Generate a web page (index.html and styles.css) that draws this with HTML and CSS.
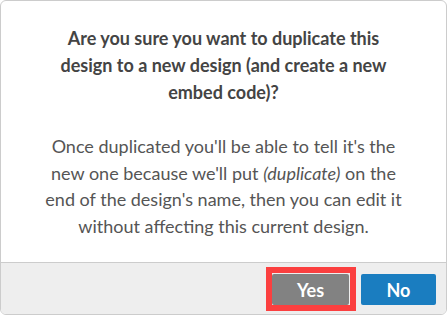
FILE: index.html
```html
<!DOCTYPE html>
<html>
<head>
<meta charset="utf-8">
<link rel="stylesheet" href="styles.css">
</head>
<body>
<div class="dialog">
  <div class="dialog-body">
    <h2 class="title">Are you sure you want to duplicate this design to a new design (and create a new embed code)?</h2>
    <p class="message">Once duplicated you'll be able to tell it's the new one because we'll put <em>(duplicate)</em> on the end of the design's name, then you can edit it without affecting this current design.</p>
  </div>
  <div class="dialog-footer">
    <button class="btn btn-yes">Yes</button>
    <button class="btn btn-no">No</button>
  </div>
</div>
</body>
</html>
```

FILE: styles.css
```css
html, body {
  margin: 0;
  padding: 0;
  background: #ffffff;
}
body {
  font-family: Lato, "Open Sans", sans-serif;
}
.dialog {
  width: 447px;
  height: 315px;
  box-sizing: border-box;
  border: 1px solid #cccccc;
  border-radius: 6px;
  overflow: hidden;
  display: flex;
  flex-direction: column;
  background: #ffffff;
}
.dialog-body {
  flex: 1;
  padding: 24px 41px 0;
  text-align: center;
}
.title {
  margin: 0;
  font-size: 18px;
  line-height: 27px;
  font-weight: 700;
  color: #444444;
}
.message {
  margin: 27px 0 0;
  font-size: 18px;
  line-height: 26.5px;
  color: #555555;
}
.dialog-footer {
  height: 52px;
  box-sizing: border-box;
  border-top: 1px solid #cccccc;
  background: #eeeeee;
  display: flex;
  justify-content: flex-end;
  align-items: flex-start;
  gap: 12px;
  padding: 11px 10px 0 0;
}
.btn {
  height: 31px;
  border: none;
  border-radius: 2px;
  font-family: Lato, "Open Sans", sans-serif;
  font-size: 18px;
  font-weight: 700;
  color: #ffffff;
  padding: 0;
  cursor: pointer;
}
.btn-yes {
  position: relative;
  width: 77px;
  background: #828282;
}
.btn-yes::after {
  content: "";
  position: absolute;
  top: -7px;
  left: -6px;
  right: -7px;
  bottom: -6px;
  border: 6px solid #fb3f3f;
}
.btn-no {
  width: 75px;
  background: #1a7dc0;
}
```
